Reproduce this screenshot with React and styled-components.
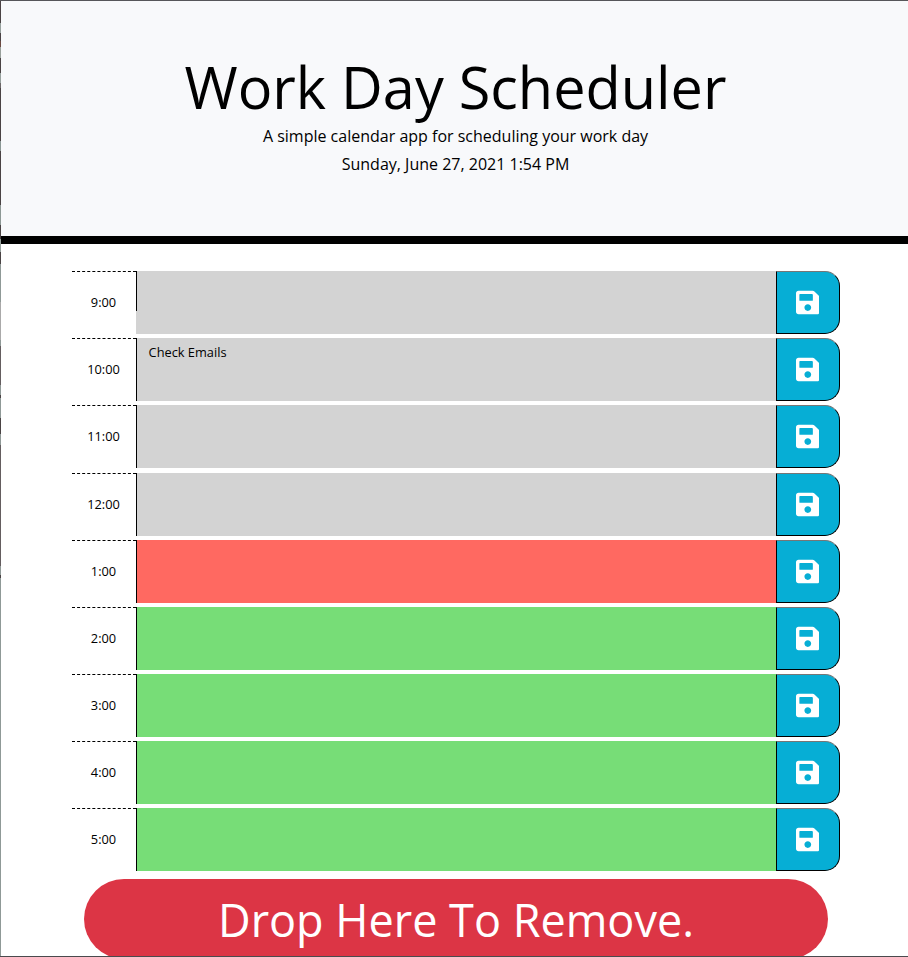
import React from "react";
import styled, { createGlobalStyle } from "styled-components";

const GlobalStyle = createGlobalStyle`
  * { box-sizing: border-box; }
  body { margin: 0; background: #fff; overflow: hidden; }
`;

const Window = styled.div`
  display: flex;
  height: 957px;
  overflow: hidden;
  border-top: 1px solid #56565a;
  border-bottom: 1px solid #4a4a4e;
  font-family: "Open Sans", sans-serif;
  font-size: 16px;
  line-height: 1;
  color: #000;
`;

const Edge = styled.div`
  flex: 0 0 1px;
  background: linear-gradient(
    #4a4344 0 22px, #96a09d 22px 32px, #4a4344 32px 40px, #6b4a42 40px 46px,
    #99a09b 46px 57px, #4a4344 57px 72px, #96a09d 72px 82px, #6c6768 82px 87px,
    #4a4344 87px 140px, #8a9794 140px 150px, #4a4344 150px 204px,
    #8d9895 204px 224px, #4a4344 224px 238px, #96a09d 238px 251px,
    #4a4344 251px 263px, #8f9997 263px 301px, #aaa9a9 301px 339px,
    #8f9997 339px 345px, #645d5f 345px 384px, #8f9997 384px 394px,
    #4a4344 394px 397px, #8f9997 397px 417px, #4a4344 417px 433px,
    #8f9997 433px 444px, #645d5f 444px 565px,
    #8f9997 565px 574px, #4a4344 574px 577px, #8f9997 577px
  );
`;

const Page = styled.main`
  flex: 1;
  min-width: 0;
`;

const Header = styled.header`
  display: flex;
  flex-direction: column;
  align-items: center;
  height: 243px;
  padding: 51px 0 0 2px;
  background: #f8f9fb;
  border-bottom: 8px solid #000;
`;

const Title = styled.h1`
  margin: 0;
  font-size: 57.6px;
  font-weight: 400;
  line-height: 70px;
  white-space: nowrap;
`;

const Lead = styled.p`
  margin: 0;
  font-size: 16px;
  line-height: 28px;
  white-space: nowrap;
`;

const Schedule = styled.section`
  display: flex;
  flex-direction: column;
  gap: 4.15px;
  width: 768px;
  margin: 27.1px 0 0 71px;
`;

const Row = styled.div`
  display: grid;
  grid-template-columns: 64px 641px 63px;
  height: 63px;
`;

const Hour = styled.div`
  display: flex;
  align-items: center;
  justify-content: center;
  padding: 0 1px 1.1px 0;
  border-top: 1px dashed #000;
  font-size: 12.8px;
`;

const fills = { past: "#d3d3d3", present: "#ff6961", future: "#77dd77" };

const Task = styled.div`
  padding: 7px 12.6px;
  font-size: 12.8px;
  line-height: 15px;
  background: linear-gradient(#000, #000) 0 0 / 1px ${(p) => (p.$short ? "40px" : "100%")} no-repeat
    ${(p) => fills[p.$when]};
`;

const SaveButton = styled.button`
  display: flex;
  align-items: center;
  justify-content: center;
  margin: 0 0 0 -1px;
  padding: 0 0.8px 0 0;
  width: 64px;
  border: 1px solid #000;
  border-top-color: #767676;
  border-radius: 0 15px 15px 0;
  background: #06aed5;
  color: #fff;

  svg { display: block; width: 23.6px; height: 27px; }
`;

const RemoveZone = styled.div`
  display: flex;
  align-items: center;
  justify-content: center;
  width: 744px;
  height: 80px;
  margin: 8px 0 0 83px;
  border-radius: 40px;
  background: #dc3545;
  color: #fff;
  font-size: 45px;
  white-space: nowrap;
`;

const SaveIcon = () => (
  <svg viewBox="0 0 448 512" fill="currentColor" aria-hidden="true">
    <path d="M433.941 129.941l-83.882-83.882A48 48 0 0 0 316.118 32H48C21.49 32 0 53.49 0 80v352c0 26.51 21.49 48 48 48h352c26.51 0 48-21.49 48-48V163.882a48 48 0 0 0-14.059-33.941zM224 416c-35.346 0-64-28.654-64-64 0-35.346 28.654-64 64-64s64 28.654 64 64c0 35.346-28.654 64-64 64zm96-304.52V212c0 6.627-5.373 12-12 12H76c-6.627 0-12-5.373-12-12V108c0-6.627 5.373-12 12-12h228.52c3.183 0 6.235 1.264 8.485 3.515l3.48 3.48A11.996 11.996 0 0 1 320 111.48z" />
  </svg>
);

const hours = [
  { time: "9:00", when: "past", short: true },
  { time: "10:00", when: "past", task: "Check Emails" },
  { time: "11:00", when: "past" },
  { time: "12:00", when: "past" },
  { time: "1:00", when: "present" },
  { time: "2:00", when: "future" },
  { time: "3:00", when: "future" },
  { time: "4:00", when: "future" },
  { time: "5:00", when: "future" },
];

export default function App() {
  return (
    <Window>
      <GlobalStyle />
      <Edge />
      <Page>
        <Header>
          <Title>Work Day Scheduler</Title>
          <Lead>A simple calendar app for scheduling your work day</Lead>
          <Lead>Sunday, June 27, 2021 1:54 PM</Lead>
        </Header>
        <Schedule>
          {hours.map((h) => (
            <Row key={h.time}>
              <Hour>{h.time}</Hour>
              <Task $when={h.when} $short={h.short}>{h.task}</Task>
              <SaveButton aria-label={`Save ${h.time}`}>
                <SaveIcon />
              </SaveButton>
            </Row>
          ))}
        </Schedule>
        <RemoveZone>Drop Here To Remove.</RemoveZone>
      </Page>
    </Window>
  );
}
